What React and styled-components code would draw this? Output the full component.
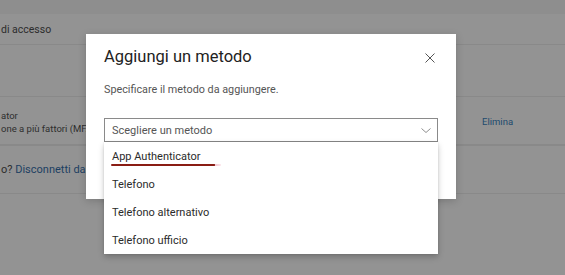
import styled, { createGlobalStyle } from "styled-components";

const Global = createGlobalStyle`
  html, body {
    margin: 0;
    padding: 0;
    background: #939393;
  }
  body {
    font-family: Roboto, "Noto Sans", sans-serif;
    overflow: hidden;
  }
`;

const Page = styled.div`
  position: relative;
  width: 565px;
  height: 275px;
  background: #939393;
  overflow: hidden;
`;

const TopBand = styled.div`
  height: 14px;
  background: #8e8e8e;
`;

const Row = styled.div`
  height: ${(p) => p.h}px;
  border-bottom: ${(p) => p.line || 1}px solid #898989;
  display: flex;
  align-items: center;
  justify-content: space-between;
  padding-left: 1px;
  box-sizing: border-box;
`;

const RowText = styled.div`
  font-size: ${(p) => p.size || 13}px;
  color: #2c2c2c;
  white-space: nowrap;
`;

const Stack = styled.div`
  display: flex;
  flex-direction: column;
  gap: 1px;
  margin-top: 3px;
`;

const SmallLine = styled.div`
  font-size: 9.5px;
  line-height: 12px;
  color: #2e2e2e;
  white-space: nowrap;
`;

const Link = styled.span`
  color: #1d3f62;
`;

const RightLink = styled.div`
  font-size: 9.5px;
  color: #1d4a6e;
  width: 83px;
  margin-top: 2px;
`;

const Overlay = styled.div`
  position: absolute;
  left: 86px;
  top: 34px;
  width: 370px;
  height: 165px;
  background: #fff;
  box-shadow: 0 2px 8px rgba(0, 0, 0, 0.18);
  padding: 11px 18px 0;
  box-sizing: border-box;
`;

const Header = styled.div`
  display: flex;
  align-items: center;
  justify-content: space-between;
  height: 24px;
`;

const Title = styled.h2`
  margin: 0;
  font-size: 16.5px;
  font-weight: 400;
  line-height: 24px;
  color: #222;
`;

const Close = styled.button`
  border: 0;
  background: none;
  padding: 0;
  width: 14px;
  height: 14px;
  display: flex;
  align-items: center;
  justify-content: center;
  margin-right: 1px;
  margin-top: 1px;
`;

const Subtitle = styled.p`
  margin: 13px 0 0;
  font-size: 10.8px;
  line-height: 16px;
  color: #555;
`;

const SelectWrap = styled.div`
  position: relative;
  margin-top: 20px;
`;

const SelectBox = styled.div`
  height: 24px;
  border: 1px solid #8a8a8a;
  box-sizing: border-box;
  display: flex;
  align-items: center;
  justify-content: space-between;
  padding: 0 6px 0 7px;
  font-size: 11px;
  color: #555;
`;

const Menu = styled.ul`
  position: absolute;
  top: 100%;
  left: 0;
  right: 0;
  margin: 0;
  padding: 0;
  list-style: none;
  background: #fff;
  box-shadow: 0 3px 6px rgba(0, 0, 0, 0.22), 0 0 2px rgba(0, 0, 0, 0.1);
  z-index: 2;
`;

const Item = styled.li`
  height: 28px;
  padding-left: 8px;
  display: flex;
  flex-direction: column;
  justify-content: center;
  font-size: 11px;
  color: #2b2b2b;
`;

const Scribble = styled.span`
  display: block;
  width: 110px;
  height: 2px;
  margin: 1px 0 -3px -1px;
  background: linear-gradient(90deg, #8a1d14 0%, #8a1d14 94%, #f4c9d2 95%, #fbe4ea 100%);
  border-radius: 1px;
`;

export default function App() {
  return (
    <Page>
      <Global />
      <TopBand />
      <Row h={31}>
        <RowText size={10.5}>di accesso</RowText>
      </Row>
      <Row h={52} />
      <Row h={49} line={2}>
        <Stack>
          <SmallLine>ator</SmallLine>
          <SmallLine>one a più fattori (MFA)</SmallLine>
        </Stack>
        <RightLink>Elimina</RightLink>
      </Row>
      <Row h={48}>
        <RowText size={11}>
          o? <Link>Disconnetti da tutto</Link>
        </RowText>
      </Row>

      <Overlay>
        <Header>
          <Title>Aggiungi un metodo</Title>
          <Close aria-label="Chiudi">
            <svg width="10" height="10" viewBox="0 0 10 10">
              <path d="M0.5 0.5 L9.5 9.5 M9.5 0.5 L0.5 9.5" stroke="#555" strokeWidth="1" fill="none" />
            </svg>
          </Close>
        </Header>
        <Subtitle>Specificare il metodo da aggiungere.</Subtitle>
        <SelectWrap>
          <SelectBox>
            <span>Scegliere un metodo</span>
            <svg width="10" height="5" viewBox="0 0 10 5">
              <path d="M0.5 0.5 L5 4.5 L9.5 0.5" stroke="#8f8f8f" strokeWidth="1" fill="none" />
            </svg>
          </SelectBox>
          <Menu>
            <Item>
              App Authenticator
              <Scribble />
            </Item>
            <Item>Telefono</Item>
            <Item>Telefono alternativo</Item>
            <Item>Telefono ufficio</Item>
          </Menu>
        </SelectWrap>
      </Overlay>
    </Page>
  );
}
